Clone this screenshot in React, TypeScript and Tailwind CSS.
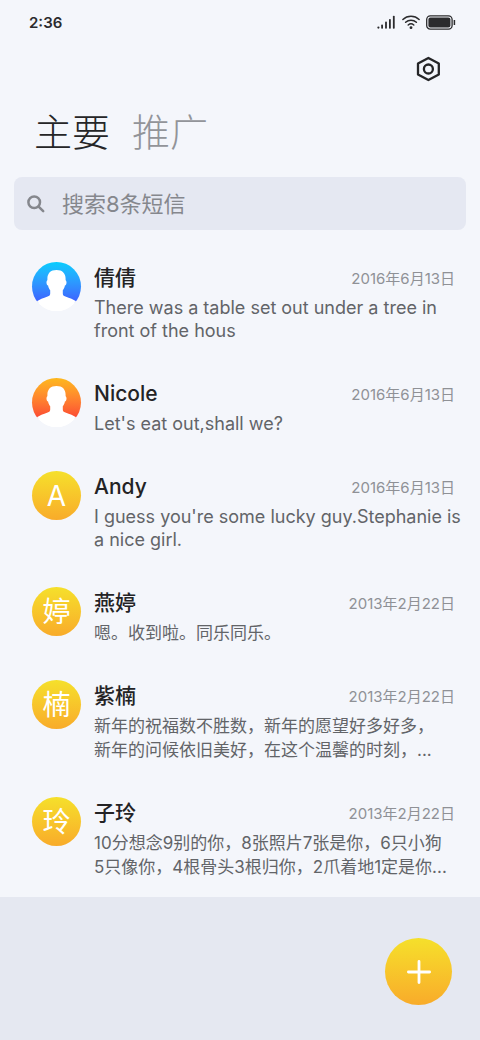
import { useState } from 'react';

type Message = {
  id: number;
  lang: 'zh' | 'en';
  name: string;
  date: string;
  text: string;
  initial?: string;
  color: string;
};

const yellow = 'from-[#f5e02b] to-[#f8ab2a]';

const messages: Message[] = [
  { id: 1, lang: 'en', name: '倩倩', date: '2016年6月13日', text: 'There was a table set out under a tree in\nfront of the hous', color: 'from-[#05cdfd] from-0% via-[#3d62ff] via-80% to-white to-85%' },
  { id: 2, lang: 'en', name: 'Nicole', date: '2016年6月13日', text: "Let's eat out,shall we?", color: 'from-[#fdb81d] from-0% via-[#fb4a33] via-80% to-white to-85%' },
  { id: 3, lang: 'en', name: 'Andy', date: '2016年6月13日', text: "I guess you're some lucky guy.Stephanie is\na nice girl.", initial: 'A', color: yellow },
  { id: 4, lang: 'zh', name: '燕婷', date: '2013年2月22日', text: '嗯。收到啦。同乐同乐。', initial: '婷', color: yellow },
  { id: 5, lang: 'zh', name: '紫楠', date: '2013年2月22日', text: '新年的祝福数不胜数，新年的愿望好多好多，\n新年的问候依旧美好，在这个温馨的时刻，...', initial: '楠', color: yellow },
  { id: 6, lang: 'zh', name: '子玲', date: '2013年2月22日', text: '10分想念9别的你，8张照片7张是你，6只小狗\n5只像你，4根骨头3根归你，2爪着地1定是你...', initial: '玲', color: yellow },
];

const textStyles = {
  en: 'mt-[3px] pb-0.5 text-lg leading-[23px]',
  zh: 'mt-[3px] pb-px text-[17px] leading-6',
};

const tabs = ['主要', '推广'];

function StatusBar() {
  return (
    <div className="flex h-11 items-center justify-between pl-[29px] pr-6 text-[#2b2b2d]">
      <span className="pt-0.5 text-[15px] font-semibold">2:36</span>
      <div className="flex items-center gap-1.5">
        <svg width="19" height="14" viewBox="0 0 19 14" fill="currentColor" aria-hidden="true">
          <circle cx="1.4" cy="12.6" r="1.1" />
          <rect x="4.2" y="9.4" width="1.8" height="4.4" rx=".8" />
          <rect x="8.1" y="6.6" width="1.8" height="7.2" rx=".8" />
          <rect x="12" y="4" width="1.8" height="9.8" rx=".8" />
          <rect x="15.9" y=".8" width="1.8" height="13" rx=".8" />
        </svg>
        <svg width="18" height="14" viewBox="0 0 18 14" fill="none" stroke="currentColor" strokeWidth="1.5" strokeLinecap="round" aria-hidden="true">
          <path d="M.9 4.5a11.8 11.8 0 0 1 16.2 0" />
          <path d="M3.6 7.3a7.9 7.9 0 0 1 10.8 0" />
          <path d="M6.2 10a4.2 4.2 0 0 1 5.6 0" />
          <circle cx="9" cy="12.6" r=".7" fill="currentColor" />
        </svg>
        <svg width="30" height="15" viewBox="0 0 30 15" fill="none" aria-hidden="true">
          <rect x=".7" y=".9" width="25.4" height="13.2" rx="3.6" stroke="currentColor" strokeWidth="1.3" />
          <rect x="2.4" y="2.6" width="22" height="9.8" rx="2" fill="currentColor" />
          <path d="M28.4 5v5" stroke="currentColor" strokeWidth="1.5" />
        </svg>
      </div>
    </div>
  );
}

function Avatar({ message }: { message: Message }) {
  return (
    <div className={`flex size-[49px] shrink-0 items-center justify-center overflow-hidden rounded-full bg-linear-to-b text-[28px] leading-none text-white ${message.color}`}>
      {message.initial ? (
        <span>{message.initial}</span>
      ) : (
        <svg className="size-full" viewBox="0 0 49 49" fill="#fff" aria-hidden="true">
          <path d="M24.5 8c-6 0-9.1 3.4-9.1 8.8v1.4c-1.4.8-1.2 4.8.7 5.4.3 2 1 3.4 2.1 4.6v3.3c0 1.6-.8 2.5-2.6 3.1-4.4 1.5-8 3-11.6 5.2V52h41V39.8c-3.6-2.2-7.2-3.7-11.6-5.2-1.8-.6-2.6-1.5-2.6-3.1v-3.3c1.1-1.2 1.8-2.6 2.1-4.6 1.9-.6 2.1-4.6.7-5.4v-1.4c0-5.4-3.1-8.8-9.1-8.8Z" />
        </svg>
      )}
    </div>
  );
}

function MessageRow({ message }: { message: Message }) {
  return (
    <li>
      <a href={`#message-${message.id}`} className="flex gap-[13px] pl-8 pr-[25px]">
        <Avatar message={message} />
        <div className="min-w-0 flex-1">
          <div className="flex items-center justify-between">
            <h2 className="text-[21px] leading-[31px] font-medium text-[#232325]">{message.name}</h2>
            <time className="pt-1 text-[15px] text-[#8f9196]">{message.date}</time>
          </div>
          <p className={`whitespace-pre text-[#626468] ${textStyles[message.lang]}`}>
            {message.text}
          </p>
        </div>
      </a>
    </li>
  );
}

export default function App() {
  const [activeTab, setActiveTab] = useState('主要');
  const [query, setQuery] = useState('');

  return (
    <div lang="zh-CN" className="flex min-h-screen flex-col bg-[#f4f6fb] font-['Inter','Noto_Sans_CJK_SC',sans-serif]">
      <StatusBar />

      <header>
        <div className="flex justify-end px-[38px]">
          <button type="button" aria-label="设置" className="flex h-[50px] items-center text-[#252527]">
            <svg width="28" height="28" viewBox="0 0 28 28" fill="none" stroke="currentColor" strokeWidth="2.3" strokeLinejoin="round">
              <path d="M14.4 2.9 24.8 8.5v11L14.4 25.1 4 19.5v-11Z" />
              <circle cx="14.4" cy="14" r="4.5" />
            </svg>
          </button>
        </div>
        <nav className="flex gap-[22px] px-[34px] pt-2.5">
          {tabs.map((tab) => (
            <button
              key={tab}
              type="button"
              onClick={() => setActiveTab(tab)}
              className={`text-[38px] leading-14 font-light ${activeTab === tab ? 'text-[#252527]' : 'text-[#929499]'}`}
            >
              {tab}
            </button>
          ))}
        </nav>
      </header>

      {/* Search */}
      <label className="mx-3.5 mt-[17px] flex h-[53px] items-center gap-4 rounded-lg bg-[#e5e8f2] px-3 text-[#85878d]">
        <svg width="20" height="20" viewBox="0 0 20 20" fill="none" stroke="currentColor" strokeWidth="2.5" strokeLinecap="round" aria-hidden="true">
          <circle cx="8.2" cy="8.2" r="5.8" />
          <path d="m12.6 12.6 4.6 4.6" />
        </svg>
        <input
          type="search"
          aria-label="搜索短信"
          placeholder="搜索8条短信"
          value={query}
          onChange={(e) => setQuery(e.target.value)}
          className="min-w-0 flex-1 bg-transparent pt-0.5 text-[22px] outline-none placeholder:text-[#85878d]"
        />
      </label>

      <main className="pt-8 pb-[17px]">
        <ul className="flex flex-col gap-[34px]">
          {messages.map((message) => (
            <MessageRow key={message.id} message={message} />
          ))}
        </ul>
      </main>

      <footer className="flex flex-1 items-start justify-end bg-[#e5e8f1] px-7 pt-[41px] pb-8">
        <button type="button" aria-label="新建短信" className="flex size-[67px] items-center justify-center rounded-full bg-linear-to-b from-[#f5e02b] to-[#f8ab2a] text-white">
          <svg width="24" height="24" viewBox="0 0 24 24" fill="none" stroke="currentColor" strokeWidth="2.8" strokeLinecap="round" aria-hidden="true">
            <path d="M12 1.4v21.2M1.4 12h21.2" />
          </svg>
        </button>
      </footer>
    </div>
  );
}
